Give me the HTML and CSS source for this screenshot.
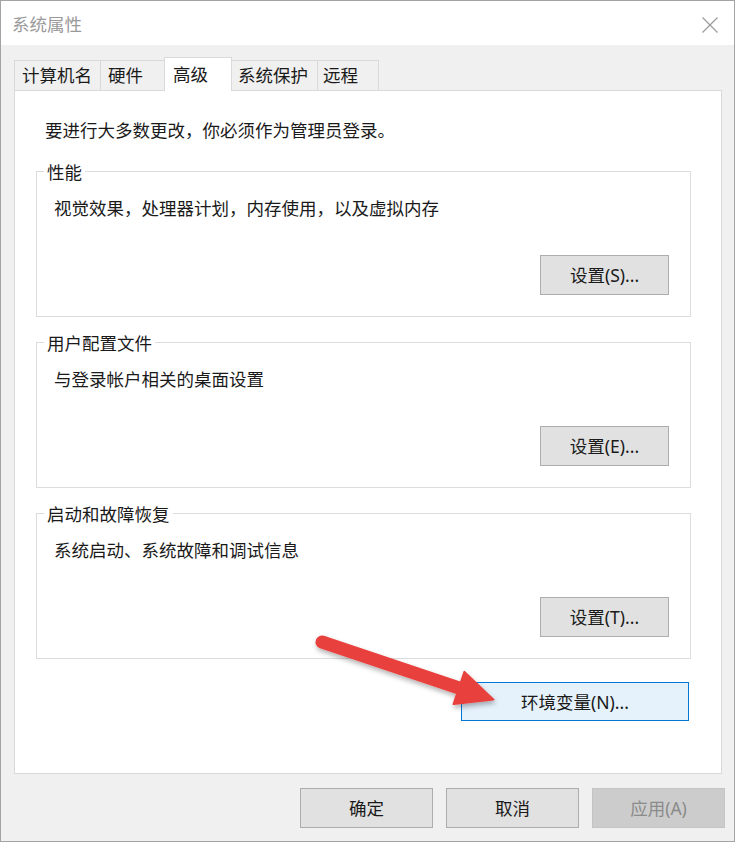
FILE: index.html
```html
<!DOCTYPE html>
<html lang="zh-CN">
<head>
<meta charset="utf-8">
<title>系统属性</title>
<link rel="stylesheet" href="styles.css">
</head>
<body>
<div class="window">
  <div class="titlebar">
    <span class="title">系统属性</span>
    <svg class="close" width="16" height="16" viewBox="0 0 16 16"><path d="M0.5 0.5 L15.5 15.5 M15.5 0.5 L0.5 15.5" stroke="#9a9a9a" stroke-width="1.2" fill="none"/></svg>
  </div>
  <div class="client">
    <div class="tabs">
      <div class="tab tab-1">计算机名</div>
      <div class="tab tab-2">硬件</div>
      <div class="tab tab-active">高级</div>
      <div class="tab tab-4">系统保护</div>
      <div class="tab tab-5">远程</div>
    </div>
    <div class="panel">
      <p class="intro">要进行大多数更改，你必须作为管理员登录。</p>
      <div class="group">
        <div class="legend">性能</div>
        <p class="desc">视觉效果，处理器计划，内存使用，以及虚拟内存</p>
        <div class="group-actions"><button class="btn">设置(S)...</button></div>
      </div>
      <div class="group">
        <div class="legend">用户配置文件</div>
        <p class="desc">与登录帐户相关的桌面设置</p>
        <div class="group-actions"><button class="btn">设置(E)...</button></div>
      </div>
      <div class="group">
        <div class="legend">启动和故障恢复</div>
        <p class="desc">系统启动、系统故障和调试信息</p>
        <div class="group-actions"><button class="btn">设置(T)...</button></div>
      </div>
      <div class="env-row"><button class="btn btn-env">环境变量(N)...</button></div>
    </div>
    <div class="footer">
      <button class="btn btn-foot">确定</button>
      <button class="btn btn-foot">取消</button>
      <button class="btn btn-foot btn-disabled">应用(A)</button>
    </div>
  </div>
  <svg class="arrow" width="735" height="842" viewBox="0 0 735 842">
    <defs>
      <filter id="sh" x="-20%" y="-20%" width="140%" height="160%">
        <feDropShadow dx="1" dy="3" stdDeviation="2.5" flood-color="#000" flood-opacity="0.3"/>
      </filter>
    </defs>
    <g filter="url(#sh)" fill="#e8403e" stroke="#e8403e">
      <line x1="322" y1="642" x2="462" y2="689" stroke-width="13" stroke-linecap="round"/>
      <polygon points="464.4,671.9 493.5,699.6 453.6,704.1" stroke-width="2" stroke-linejoin="round"/>
    </g>
  </svg>
</div>
</body>
</html>
```
FILE: styles.css
```css
* { box-sizing: border-box; }

html, body {
  margin: 0;
  padding: 0;
  background: #ffffff;
}

body {
  font-family: "Noto Sans", "Noto Sans CJK SC", sans-serif;
  font-size: 17.5px;
  color: #1a1a1a;
}

.window {
  position: relative;
  width: 735px;
  height: 842px;
  border: 1px solid #a3a3a3;
  background: #f0f0f0;
  display: flex;
  flex-direction: column;
}

.titlebar {
  height: 44px;
  background: #ffffff;
  display: flex;
  align-items: center;
  justify-content: space-between;
  padding: 0 16px 0 11px;
  flex-shrink: 0;
}

.title {
  color: #9a9a9a;
  font-size: 17.5px;
  line-height: 20px;
  margin-top: 2px;
}

.close {
  display: block;
  margin-top: 3px;
}

.client {
  flex: 1;
  display: flex;
  flex-direction: column;
}

.tabs {
  display: flex;
  align-items: flex-end;
  margin: 12px 0 -1px 13px;
  height: 34px;
  position: relative;
  z-index: 1;
}

.tab {
  height: 30px;
  margin-bottom: 1px;
  border: 1px solid #d9d9d9;
  border-bottom: none;
  border-right: none;
  background: #f0f0f0;
  line-height: 29px;
  padding-left: 7px;
  white-space: nowrap;
}

.tab-1 { width: 86px; }
.tab-2 { width: 64px; }
.tab-active {
  width: 68px;
  height: 34px;
  margin-bottom: 0;
  background: #ffffff;
  border-right: 1px solid #d9d9d9;
  line-height: 33px;
  padding-left: 8px;
}
.tab-4 { width: 85px; border-left: none; padding-left: 6px; }
.tab-5 { width: 62px; border-right: 1px solid #d9d9d9; padding-left: 5px; }

.panel {
  margin-left: 13px;
  width: 708px;
  height: 684px;
  background: #ffffff;
  border: 1px solid #d9d9d9;
  flex-shrink: 0;
}

.intro {
  margin: 29px 0 0 30px;
  line-height: 20px;
}

.group {
  margin: 31px 0 0 21px;
  width: 655px;
  border: 1px solid #dcdcdc;
  padding-bottom: 21px;
}

.group + .group {
  margin-top: 25px;
}

.legend {
  display: block;
  width: fit-content;
  margin: -10px 0 0 7px;
  padding: 0 3px;
  background: #ffffff;
  line-height: 20px;
}

.desc {
  margin: 16px 0 0 17px;
  line-height: 20px;
}

.group-actions {
  display: flex;
  justify-content: flex-end;
  padding-right: 21px;
  margin-top: 37px;
}

.btn {
  font-family: inherit;
  font-size: 17.5px;
  color: #1a1a1a;
  background: #e1e1e1;
  border: 1px solid #adadad;
  height: 40px;
  width: 129px;
  padding: 0;
  line-height: 20px;
  border-radius: 0;
}

.env-row {
  display: flex;
  justify-content: flex-end;
  padding-right: 32px;
  margin-top: 23px;
}

.btn-env {
  width: 228px;
  height: 39px;
  background: #e5f1fb;
  border-color: #0078d7;
}

.footer {
  display: flex;
  justify-content: flex-end;
  gap: 13px;
  margin-top: 14px;
  padding-right: 9px;
}

.btn-foot {
  width: 133px;
}

.btn-disabled {
  background: #cccccc;
  border-color: #c4c4c4;
  color: #8b8b8b;
}

.arrow {
  position: absolute;
  left: -1px;
  top: -1px;
  pointer-events: none;
}
```
